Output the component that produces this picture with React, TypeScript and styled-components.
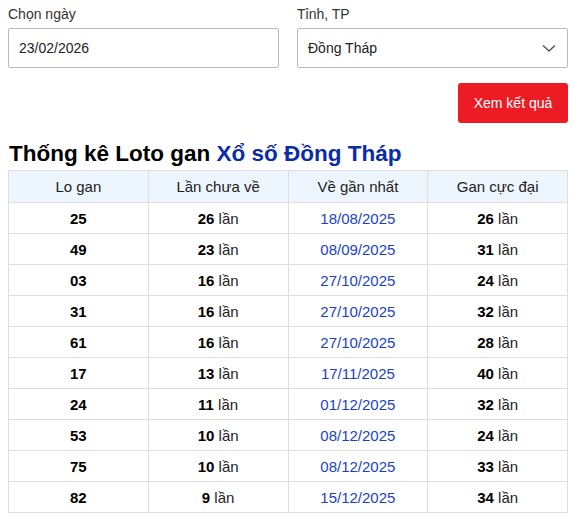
import React from "react";
import styled, { createGlobalStyle } from "styled-components";

const Global = createGlobalStyle`
  body { margin: 8px 7px 8px 8px; font-family: "Liberation Sans", Arial, sans-serif; color: #222; background: #fff; }
`;

const Page = styled.div`
  width: 560px;
`;

const Form = styled.div`
  display: grid;
  grid-template-columns: 1fr 1fr;
  column-gap: 18px;
`;

const Field = styled.div`
  display: flex;
  flex-direction: column;
`;

const Label = styled.label`
  font-size: 14px;
  line-height: 12px;
  color: #333;
  margin-bottom: 8px;
`;

const Box = styled.div`
  height: 40px;
  box-sizing: border-box;
  border: 1px solid #bbb;
  border-radius: 2px;
  display: flex;
  align-items: center;
  justify-content: space-between;
  padding: 0 10px 0 10px;
  font-size: 14px;
  color: #222;
`;

const Actions = styled.div`
  display: flex;
  justify-content: flex-end;
  margin-top: 15px;
`;

const Button = styled.button`
  width: 110px;
  height: 40px;
  background: #ed1c24;
  color: #fff;
  border: none;
  border-radius: 3px;
  font-family: inherit;
  font-size: 14px;
`;

const Title = styled.h2`
  margin: 18px 0 3px 1px;
  font-size: 22.5px;
  line-height: 26px;
  font-weight: bold;
  color: #000;
`;

const Blue = styled.span`
  color: #0a2ca8;
`;

const Table = styled.table`
  width: 100%;
  border-collapse: collapse;
  table-layout: fixed;
  font-size: 15px;
`;

const Th = styled.th`
  background: #eef6fd;
  font-weight: normal;
  height: 31px;
  border: 1px solid #dedede;
  color: #222;
  padding: 0;
`;

const Td = styled.td<{ $date?: boolean }>`
  height: 30px;
  border: 1px solid #dedede;
  text-align: center;
  padding: 0;
  color: ${(p) => (p.$date ? "#1a3fcc" : "#222")};
`;

const B = styled.b`
  color: #000;
`;

const rows = [
  ["25", "26", "18/08/2025", "26"],
  ["49", "23", "08/09/2025", "31"],
  ["03", "16", "27/10/2025", "24"],
  ["31", "16", "27/10/2025", "32"],
  ["61", "16", "27/10/2025", "28"],
  ["17", "13", "17/11/2025", "40"],
  ["24", "11", "01/12/2025", "32"],
  ["53", "10", "08/12/2025", "24"],
  ["75", "10", "08/12/2025", "33"],
  ["82", "9", "15/12/2025", "34"],
];

export default function App() {
  return (
    <Page>
      <Global />
      <Form>
        <Field>
          <Label>Chọn ngày</Label>
          <Box>23/02/2026</Box>
        </Field>
        <Field>
          <Label>Tỉnh, TP</Label>
          <Box>
            Đồng Tháp
            <svg width="16" height="16" viewBox="0 0 16 16" fill="none">
              <path d="M2 5.5 L8 11 L14 5.5" stroke="#555" strokeWidth="1.4" />
            </svg>
          </Box>
        </Field>
      </Form>
      <Actions>
        <Button>Xem kết quả</Button>
      </Actions>
      <Title>
        Thống kê Loto gan <Blue>Xổ số Đồng Tháp</Blue>
      </Title>
      <Table>
        <thead>
          <tr>
            <Th>Lo gan</Th>
            <Th>Lần chưa về</Th>
            <Th>Về gần nhất</Th>
            <Th>Gan cực đại</Th>
          </tr>
        </thead>
        <tbody>
          {rows.map((r, i) => (
            <tr key={i}>
              <Td><B>{r[0]}</B></Td>
              <Td><B>{r[1]}</B> lần</Td>
              <Td $date>{r[2]}</Td>
              <Td><B>{r[3]}</B> lần</Td>
            </tr>
          ))}
        </tbody>
      </Table>
    </Page>
  );
}
